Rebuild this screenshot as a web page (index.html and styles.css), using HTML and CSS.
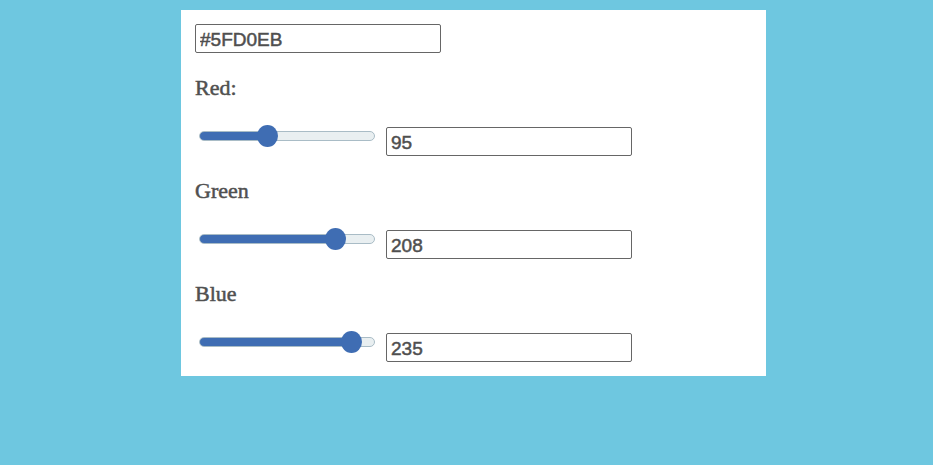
FILE: index.html
```html
<!DOCTYPE html>
<html>
<head>
<meta charset="utf-8">
<link rel="stylesheet" href="styles.css">
</head>
<body>
<div class="panel">
  <input class="field hex" type="text" value="#5FD0EB">
  <div class="group">
    <div class="label">Red:</div>
    <div class="row">
      <input class="slider" type="range" min="0" max="255" value="95" style="--p: 37.25%">
      <input class="field num" type="text" value="95">
    </div>
  </div>
  <div class="group">
    <div class="label">Green</div>
    <div class="row">
      <input class="slider" type="range" min="0" max="255" value="208" style="--p: 81.57%">
      <input class="field num" type="text" value="208">
    </div>
  </div>
  <div class="group">
    <div class="label">Blue</div>
    <div class="row">
      <input class="slider" type="range" min="0" max="255" value="235" style="--p: 92.16%">
      <input class="field num" type="text" value="235">
    </div>
  </div>
</div>
</body>
</html>
```

FILE: styles.css
```css
html, body {
  margin: 0;
  padding: 0;
}
body {
  background: #6ec7e0;
  width: 933px;
  height: 465px;
  overflow: hidden;
  padding: 10px 0 0 181px;
  box-sizing: border-box;
}
.panel {
  width: 585px;
  height: 366px;
  box-sizing: border-box;
  background: #ffffff;
  padding: 14px 14px 14px 14px;
  display: flex;
  flex-direction: column;
  gap: 22px;
}
.field {
  box-sizing: border-box;
  width: 246px;
  height: 29px;
  margin: 0;
  border: 1px solid #666666;
  border-radius: 2px;
  padding: 2px 4px 0 4px;
  font-family: "Liberation Sans", Arial, sans-serif;
  font-size: 19px;
  color: #4f4f4f;
  -webkit-text-stroke: 0.5px #4f4f4f;
  background: #fff;
  outline: none;
}
.group {
  display: flex;
  flex-direction: column;
  gap: 26px;
}
.label {
  font-family: "Liberation Serif", "Times New Roman", serif;
  font-size: 22px;
  line-height: 26px;
  height: 26px;
  color: #505050;
  -webkit-text-stroke: 0.5px #505050;
}
.row {
  display: flex;
  align-items: flex-start;
  height: 29px;
}
.slider {
  -webkit-appearance: none;
  appearance: none;
  width: 176px;
  height: 22px;
  margin: -2px 11px 0 4px;
  padding: 0;
  background: transparent;
}
.slider::-webkit-slider-runnable-track {
  height: 10px;
  border-radius: 5px;
  box-sizing: border-box;
  border: 1px solid #a9bcc6;
  background: linear-gradient(to right, #3f6db3 0, #3f6db3 calc(10px + (100% - 20px) * var(--p) / 100%), #e9eff1 calc(10px + (100% - 20px) * var(--p) / 100%));
}
.slider::-webkit-slider-thumb {
  -webkit-appearance: none;
  appearance: none;
  width: 21px;
  height: 22px;
  border-radius: 50%;
  background: #3f6db3;
  border: none;
  margin-top: -7px;
}
```
